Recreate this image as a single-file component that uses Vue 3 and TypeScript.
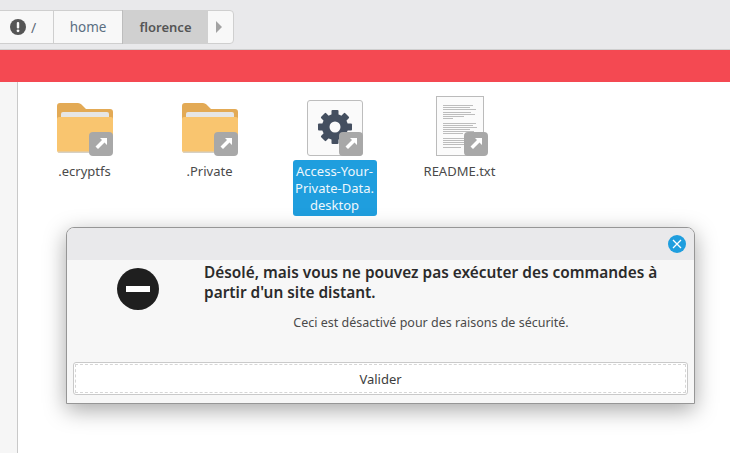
<script setup lang="ts">
// File manager window with the "can't run from a remote site" dialog on top.
interface FileItem {
  name: string
  kind: 'folder' | 'desktop' | 'text'
  selected?: boolean
}

const files: FileItem[] = [
  { name: '.ecryptfs', kind: 'folder' },
  { name: '.Private', kind: 'folder' },
  { name: 'Access-Your-Private-Data.desktop', kind: 'desktop', selected: true },
  { name: 'README.txt', kind: 'text' },
]

const textLines = [
  30, 27, 33, 28, 32, 21, 10, 0, 33, 30, 34, 27, 31, 20, 0, 32, 28, 24, 21, 18,
]
const teeth = [0, 45, 90, 135]
</script>

<template>
  <div class="window">
    <header class="toolbar">
      <nav class="crumbs">
        <div class="crumb crumb--root">
          <svg class="warn" width="16" height="16" viewBox="0 0 16 16">
            <circle cx="8" cy="8" r="8" fill="#555" />
            <rect x="6.8" y="3" width="2.4" height="6.4" rx="1" fill="#f8f8f8" />
            <circle cx="8" cy="11.8" r="1.4" fill="#f8f8f8" />
          </svg>
          <span class="slash">/</span>
        </div>
        <div class="crumb crumb--home">home</div>
        <div class="crumb crumb--current">florence</div>
        <div class="crumb crumb--next"><span class="tri"></span></div>
      </nav>
    </header>
    <div class="alert-bar"></div>
    <div class="body">
      <aside class="side"></aside>
      <main class="files">
        <div v-for="f in files" :key="f.name" class="item">
          <div class="thumb">
            <svg v-if="f.kind === 'folder'" class="folder" width="56" height="50" viewBox="0 0 56 50">
              <path d="M3 0h18q2 0 3.500 1.500L29 6h24q3 0 3 3v10H0V3q0-3 3-3z" fill="#e3aa55" />
              <rect x="4" y="9" width="48" height="12" rx="2" fill="#e6e6e6" />
              <path d="M0 16q0-2 2-2h52q2 0 2 2v31q0 3-3 3H3q-3 0-3-3z" fill="#f9c56f" />
              <path d="M0.500 48.500q1 1.500 2.500 1.500h50q1.500 0 2.500-1.500z" fill="#d6d0c4" />
            </svg>
            <div v-else-if="f.kind === 'desktop'" class="tile">
              <svg width="36" height="36" viewBox="0 0 36 36">
                <g fill="#444f60">
                  <rect
                    v-for="a in teeth"
                    :key="a"
                    x="14.500"
                    y="1"
                    width="7"
                    height="34"
                    rx="1"
                    :transform="`rotate(${a} 18 18)`"
                  />
                  <circle cx="18" cy="18" r="13" />
                </g>
                <circle cx="18" cy="18" r="5.500" fill="#fafafa" />
              </svg>
            </div>
            <div v-else class="page">
              <i
                v-for="(w, i) in textLines"
                :key="i"
                class="line"
                :style="{ width: w + 'px', opacity: w ? 1 : 0 }"
              ></i>
            </div>
            <span class="badge">
              <svg width="14" height="14" viewBox="0 0 14 14">
                <path d="M6 1h7v7l-2.500-2.500-6.500 6.500-2.500-2.500 6.500-6.500z" fill="#fff" />
              </svg>
            </span>
          </div>
          <div class="label" :class="{ 'label--selected': f.selected }">
            <template v-if="f.selected">Access-Your-<br />Private-Data.<br />desktop</template>
            <template v-else>{{ f.name }}</template>
          </div>
        </div>
      </main>
    </div>

    <section class="dialog">
      <div class="dialog__bar">
        <span class="close">
          <svg width="10" height="10" viewBox="0 0 10 10">
            <path d="M1 1l8 8M9 1l-8 8" stroke="#fff" stroke-width="1.300" fill="none" />
          </svg>
        </span>
      </div>
      <div class="dialog__content">
        <div class="stop-col">
          <span class="stop"><i></i></span>
        </div>
        <div class="msg">
          <h1>Désolé, mais vous ne pouvez pas exécuter des commandes à partir d'un site distant.</h1>
          <p>Ceci est désactivé pour des raisons de sécurité.</p>
        </div>
      </div>
      <div class="dialog__actions">
        <button class="btn" type="button"><span>Valider</span></button>
      </div>
    </section>
  </div>
</template>

<style>
html, body { margin: 0; overflow: hidden; }
</style>

<style scoped>
.window {
  position: relative;
  width: 730px;
  height: 453px;
  overflow: hidden;
  background: #fff;
  font-family: "Noto Sans", "Open Sans", sans-serif;
  color: #3d3d3d;
  display: flex;
  flex-direction: column;
}
.toolbar {
  flex: none;
  box-sizing: border-box;
  padding-top: 10px;
  background: #e9e9eb;
  border-bottom: 1px solid #cfcfcf;
  height: 50px;
}
.crumbs {
  display: flex;
  width: 235px;
  height: 34px;
  margin-left: -1px;
  box-sizing: border-box;
  background: #f8f8f8;
  border: 1px solid #cfcfcf;
  border-radius: 0 4px 4px 0;
  font-size: 13.5px;
}
.crumb {
  display: flex;
  align-items: center;
  box-sizing: border-box;
}
.crumb--root {
  width: 54px;
  padding-left: 10px;
  gap: 5px;
  border-right: 1px solid #cfcfcf;
}
.slash { color: #5f6b78; font-size: 14px; }
.crumb--home {
  width: 68px;
  justify-content: center;
  color: #5b6f82;
}
.crumb--current {
  width: 86px;
  justify-content: center;
  background: #d0d0d0;
  color: #555;
  font-weight: 600;
  font-size: 13px;
  border-left: 1px solid #bdbdbd;
  margin: -1px 0;
}
.crumb--next { flex: 1; padding-left: 8px; }
.tri {
  width: 0;
  height: 0;
  border-left: 6px solid #a3a3a3;
  border-top: 6px solid transparent;
  border-bottom: 6px solid transparent;
}
.alert-bar {
  height: 32px;
  flex: none;
  background: #f44952;
}
.body {
  flex: 1;
  display: flex;
  min-height: 0;
}
.side {
  width: 17px;
  flex: none;
  background: #f6f6f6;
  border-right: 1px solid #c9c9c9;
}
.files {
  flex: 1;
  display: flex;
  align-items: flex-start;
  padding: 14px 0 0 4px;
}
.item {
  width: 125px;
  display: flex;
  flex-direction: column;
  align-items: center;
}
.thumb {
  position: relative;
  width: 56px;
  height: 60px;
  display: flex;
  align-items: flex-end;
  justify-content: center;
}
.folder { display: block; margin-bottom: 3px; }
.tile {
  width: 56px;
  height: 56px;
  box-sizing: border-box;
  background: #fafafa;
  border: 1px solid #bdbdbd;
  border-radius: 3px;
  display: flex;
  align-items: center;
  justify-content: center;
  padding: 0 0 2px;
}
.page {
  width: 48px;
  height: 60px;
  box-sizing: border-box;
  background: #fbfbfb;
  border: 1px solid #bbb;
  padding: 8px 6px;
  display: flex;
  flex-direction: column;
  gap: 1.200px;
}
.line {
  display: block;
  height: 1px;
  background: #bdbdbd;
  flex: none;
}
.badge {
  position: absolute;
  right: 0;
  bottom: 0;
  width: 24px;
  height: 24px;
  border-radius: 4px;
  background: #a8a8a8;
  display: flex;
  align-items: center;
  justify-content: center;
}
.label {
  margin-top: 3px;
  padding: 3px 4px;
  font-size: 13px;
  line-height: 18px;
  text-align: center;
  color: #4a4a4a;
}
.label--selected {
  width: 84px;
  box-sizing: border-box;
  margin-top: 4px;
  padding: 3px 0 2px;
  border-radius: 3px;
  background: #1f9ede;
  color: #eef7fc;
  line-height: 17px;
}
.dialog {
  position: absolute;
  left: 66px;
  top: 227px;
  width: 629px;
  height: 177px;
  box-sizing: border-box;
  background: #f7f7f7;
  border: 1px solid #969696;
  border-radius: 8px 8px 0 0;
  box-shadow: 0 6px 22px rgba(0, 0, 0, 0.35);
  display: flex;
  flex-direction: column;
}
.dialog__bar {
  height: 32px;
  flex: none;
  background: #e9e9eb;
  border-radius: 7px 7px 0 0;
  display: flex;
  align-items: center;
  justify-content: flex-end;
  padding: 0 8px 0 0;
}
.close {
  width: 18px;
  height: 18px;
  border-radius: 50%;
  background: #1f9ede;
  display: flex;
  align-items: center;
  justify-content: center;
}
.dialog__content {
  flex: 1;
  display: flex;
}
.stop-col {
  width: 137px;
  flex: none;
  display: flex;
  justify-content: center;
  padding: 8px 0 0 4px;
  box-sizing: border-box;
}
.stop {
  width: 42px;
  height: 42px;
  border-radius: 50%;
  background: #1f1f1f;
  display: flex;
  align-items: center;
  justify-content: center;
}
.stop i {
  display: block;
  width: 24px;
  height: 6px;
  background: #fff;
}
.msg { width: 454px; padding-top: 3px; }
.msg h1 {
  margin: 0;
  font-size: 15.400px;
  line-height: 20px;
  font-weight: 600;
  color: #2b2b2b;
}
.msg p {
  margin: 11px 0 0;
  font-size: 12.500px;
  line-height: 18px;
  text-align: center;
  color: #4a4a4a;
}
.dialog__actions {
  padding: 0 6px 8px;
  flex: none;
}
.btn {
  display: block;
  width: 100%;
  height: 33px;
  padding: 1px;
  box-sizing: border-box;
  background: #fff;
  border: 1px solid #c9c9c9;
  border-radius: 3px;
  font: inherit;
  font-size: 13px;
  color: #3d3d3d;
}
.btn span {
  display: flex;
  align-items: center;
  justify-content: center;
  height: 100%;
  border: 1px dashed #d6d6d6;
  box-sizing: border-box;
}
</style>
